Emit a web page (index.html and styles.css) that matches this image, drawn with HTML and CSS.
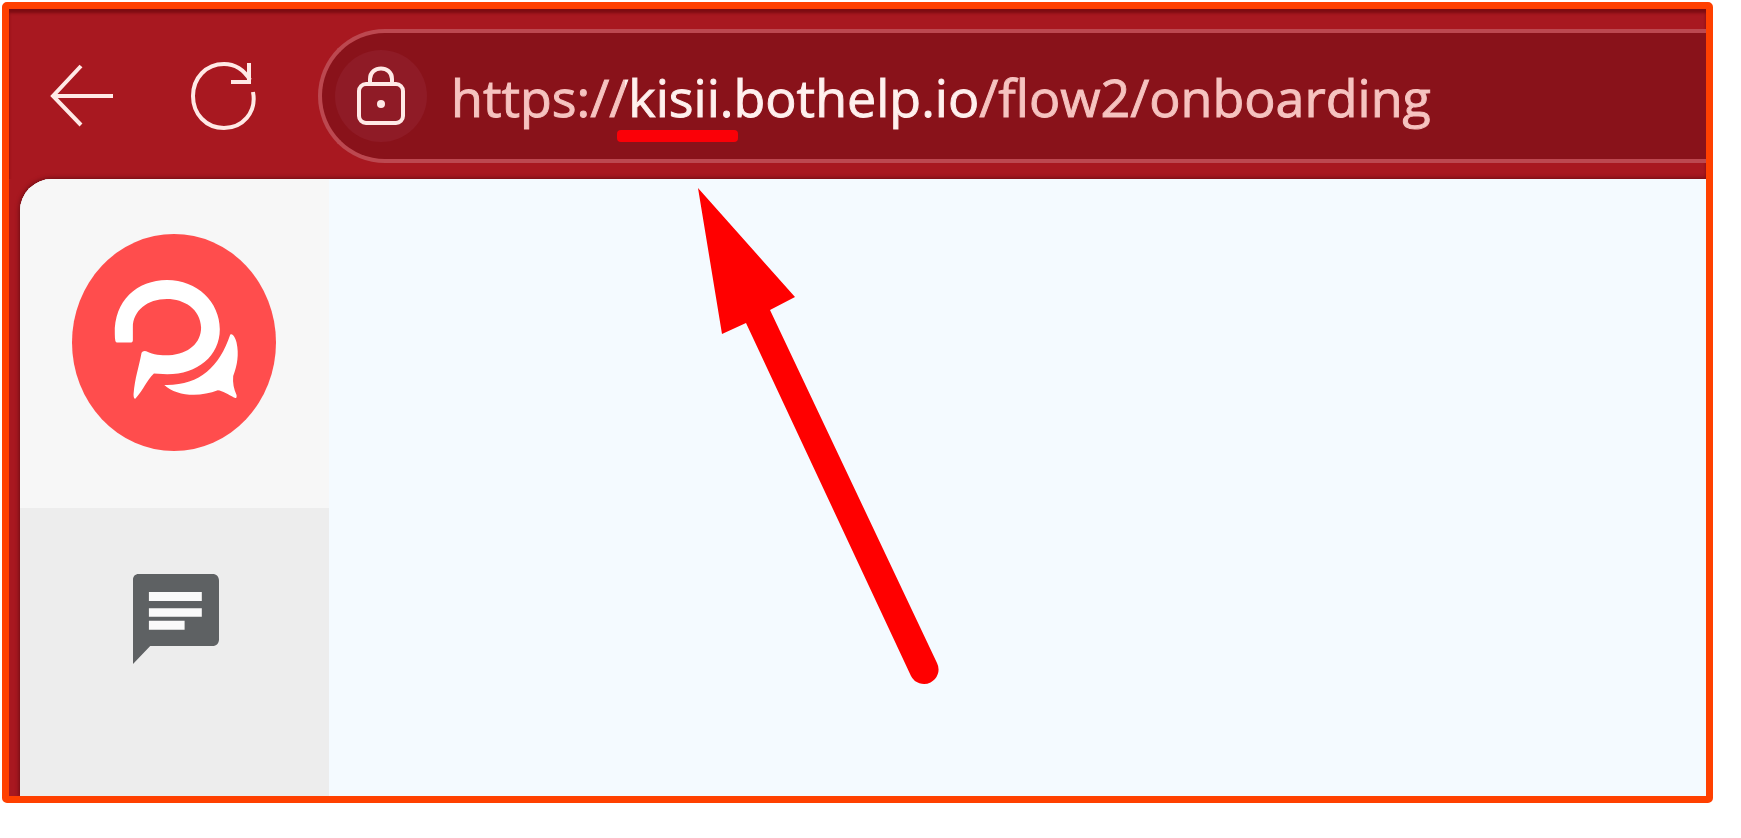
FILE: index.html
```
<!DOCTYPE html>
<html lang="en">

<head>
    <meta charset="UTF-8">
    <meta name="viewport" content="width=device-width, initial-scale=1.0">
    <title>Onboarding</title>
    <link rel="stylesheet" href="styles.css">
</head>

<body>
    <div class="frame">
        <div class="toolbar">
            <button class="nav_btn" type="button" aria-label="Back">
                <svg width="64" height="64" viewBox="0 0 64 64">
                    <path d="M31 2L3 32L31 61M3 32H63" />
                </svg>
            </button>
            <button class="nav_btn" type="button" aria-label="Reload">
                <svg width="66" height="70" viewBox="0 0 66 70">
                    <path d="M62 31C66 52 51 67 33 67C15 67 2 53 2 35C2 17 15 3 33 3C44 3 53 9 59 19M58 2V21H40" />
                </svg>
            </button>
            <div class="address">
                <button class="lock" type="button" aria-label="Site information">
                    <svg width="50" height="60" viewBox="0 0 50 60">
                        <rect x="3" y="18" width="44" height="39" rx="7" />
                        <path d="M14 18V13C14 -1 36 -1 36 13V18" />
                        <circle cx="25" cy="38" r="4" class="dot" />
                    </svg>
                </button>
                <input class="url" type="text" aria-label="Address" spellcheck="false" value="https://kisii.bothelp.io/flow2/onboarding">
                <div class="underline"></div>
            </div>
        </div>
        <div class="page">
            <div class="side">
                <a class="logo" href="#" aria-label="BotHelp">
                    <svg width="204" height="217" viewBox="0 0 610 650" preserveAspectRatio="none">
                        <ellipse cx="305" cy="325" rx="305" ry="325" fill="#ff4d4d" />
                        <path fill="#fff" d="M134 325Q128 325 128 300C125 200 195 138 284 138C375 138 442 205 442 285C442 365 375 420 285 420L245 418C222 440 215 465 190 493Q184 495 184 480C188 430 200 400 208 356Q212 348 222 351C245 362 265 363 290 363C350 360 386 325 386 280C384 225 335 195 284 195C225 195 182 230 182 280V318Q182 325 174 325Z" />
                        <path fill="#fff" d="M473 302C480 296 488 310 492 325C500 360 494 395 482 425C480 445 484 465 492 482Q494 495 484 490C468 480 450 470 436 468C380 490 310 485 276 452C380 455 440 400 473 302Z" />
                    </svg>
                </a>
                <a class="chat" href="#" aria-label="Messages">
                    <svg width="86" height="90" viewBox="2 2 20 20" preserveAspectRatio="none">
                        <path fill="#5e6163" d="M20.500 2H3.300C2.500 2 2 2.500 2 3.300V22L6 18H20.500C21.400 18 22 17.400 22 16.500V3.500C22 2.600 21.400 2 20.500 2Z" />
                        <path fill="#fafafa" d="M5.700 6H18V8H5.700ZM5.700 9.600H18V11.500H5.700ZM5.700 12.400H14V14.400H5.700Z" />
                    </svg>
                </a>
            </div>
            <div class="content">
                <svg class="arrow" width="244" height="500" viewBox="0 0 244 500">
                    <path d="M1 1L98 110L73 123L240 476A14 14 0 0 1 214 489L49 136L25 147Z" />
                </svg>
            </div>
        </div>
    </div>
</body>

</html>
```
FILE: styles.css
```
body {
    margin: 0px;
    background-color: #ffffff;
}

* {
    box-sizing: border-box;
    font-family: "Open Sans", "Noto Sans", sans-serif;
}

button {
    border: none;
    padding: 0px;
    background: none;
    cursor: pointer;
}

svg {
    display: block;
}

.frame {
    margin: 2px 28px 0px 2px;
    height: calc(100vh - 37px);
    border: 7px solid #ff4000;
    border-radius: 5px;
    background-color: #a81820;
    display: flex;
    flex-direction: column;
    overflow: hidden;
}

.toolbar {
    height: 170px;
    flex: none;
    display: flex;
    align-items: center;
    padding: 4px 0px 0px 41px;
    box-shadow: inset 0px 4px 3px #7c0c12;
}

.nav_btn {
    margin-right: 77px;
}

.nav_btn + .nav_btn {
    margin-right: 61px;
}

.nav_btn svg,
.lock svg {
    fill: none;
    stroke: #ffe9e6;
    stroke-width: 4;
}

.address {
    position: relative;
    flex: 1;
    height: 134px;
    display: flex;
    align-items: center;
    border: 4px solid #bc4850;
    border-right: none;
    border-radius: 68px 0px 0px 68px;
    background-color: #89121a;
}

.lock {
    width: 92px;
    height: 92px;
    flex: none;
    margin-left: 13px;
    border-radius: 50%;
    background-color: #8f1b26;
    display: flex;
    align-items: center;
    justify-content: center;
}

.lock .dot {
    fill: #ffe9e6;
    stroke: none;
}

/* the host part of the url is brighter than the rest */
.url {
    flex: 1;
    min-width: 0px;
    height: 80px;
    margin-left: 24px;
    padding: 0px;
    border: none;
    outline: none;
    font-size: 52px;
    color: transparent;
    -webkit-text-stroke: 1px transparent;
    background: linear-gradient(90deg, #f6c3c0 174px, #fff0ee 174px, #fff0ee 526px, #f6c3c0 526px);
    -webkit-background-clip: text;
    background-clip: text;
}

.underline {
    position: absolute;
    left: 295px;
    top: 97px;
    width: 121px;
    height: 12px;
    border-radius: 4px;
    background-color: #fb0007;
}

.page {
    flex: 1;
    margin-left: 11px;
    display: flex;
    border-radius: 32px 0px 0px 0px;
    overflow: hidden;
    background-color: #f4faff;
    box-shadow: 0px 0px 4px 1px #6d0d14;
}

.side {
    width: 309px;
    flex: none;
    background-color: #ededed;
}

.logo {
    height: 329px;
    padding: 55px 0px 0px 52px;
    display: block;
    background-color: #f7f7f7;
}

.chat {
    display: block;
    padding: 66px 0px 0px 113px;
}

.content {
    position: relative;
    flex: 1;
}

.arrow {
    position: absolute;
    left: 368px;
    top: 8px;
    fill: #ff0000;
}
```
